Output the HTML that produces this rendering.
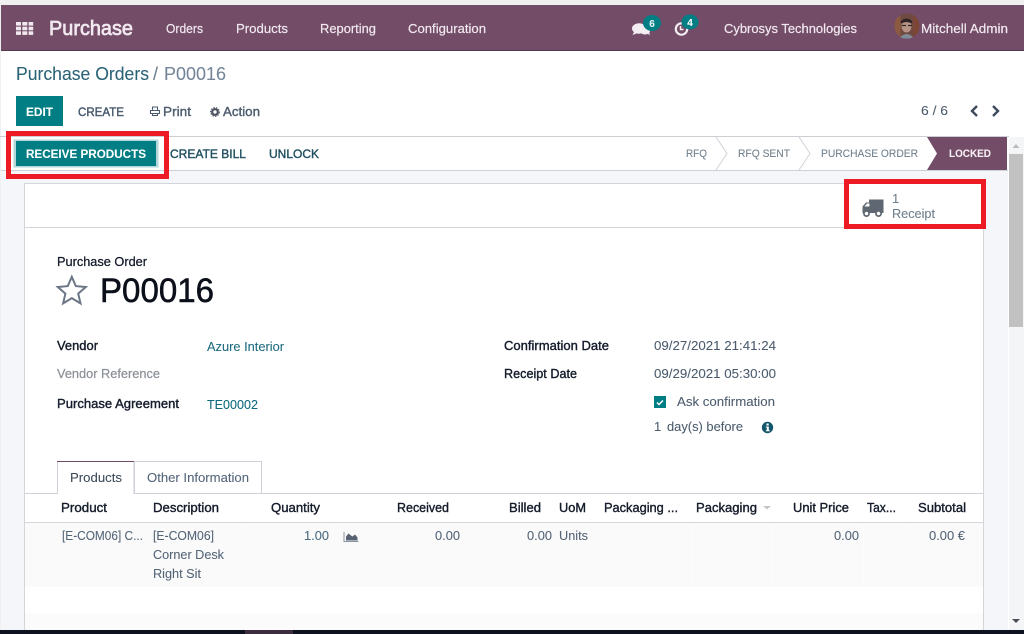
<!DOCTYPE html>
<html><head><meta charset="utf-8"><style>
html,body{margin:0;padding:0;background:#fff;width:1024px;height:634px;overflow:hidden}
svg{display:block}
text{font-family:"Liberation Sans",sans-serif;font-size:13px;white-space:pre;stroke:currentColor;stroke-width:.08}
.m{stroke-width:.38}
</style></head><body>
<svg width="1024" height="634" viewBox="0 0 1024 634" xmlns="http://www.w3.org/2000/svg">
<rect width="1024" height="634" fill="#fff"/>
<rect x="0" y="0" width="1024" height="5" fill="#f0f0f0"/>
<rect x="0" y="0" width="1" height="634" fill="#f0f0f0"/>
<rect x="1" y="5" width="1023" height="45" fill="#734c68"/>
<rect x="1" y="50" width="1023" height="1" fill="#4e3a4c"/>
<!-- grid -->
<g fill="#f0e8ee">
<rect x="16" y="22" width="5" height="3.600"/><rect x="22.300" y="22" width="5" height="3.600"/><rect x="28.600" y="22" width="4.600" height="3.600"/>
<rect x="16" y="26.700" width="5" height="3.600"/><rect x="22.300" y="26.700" width="5" height="3.600"/><rect x="28.600" y="26.700" width="4.600" height="3.600"/>
<rect x="16" y="31.300" width="5" height="3.600"/><rect x="22.300" y="31.300" width="5" height="3.600"/><rect x="28.600" y="31.300" width="4.600" height="3.600"/>
</g>
<g fill="#f1e9ef" color="#f1e9ef">
<text x="49" y="35" textLength="84" lengthAdjust="spacingAndGlyphs" style="font-size:20px;stroke-width:.7">Purchase</text>
<text x="166" y="33" textLength="37" lengthAdjust="spacingAndGlyphs" style="stroke-width:.2">Orders</text>
<text x="236" y="33" textLength="52" lengthAdjust="spacingAndGlyphs" style="stroke-width:.2">Products</text>
<text x="320" y="33" textLength="56" lengthAdjust="spacingAndGlyphs" style="stroke-width:.2">Reporting</text>
<text x="408" y="33" textLength="78" lengthAdjust="spacingAndGlyphs" style="stroke-width:.2">Configuration</text>
<text x="724" y="33" textLength="133" lengthAdjust="spacingAndGlyphs" style="stroke-width:.2">Cybrosys Technologies</text>
<text x="921" y="33" textLength="87" lengthAdjust="spacingAndGlyphs" style="stroke-width:.2">Mitchell Admin</text>
</g>
<!-- chat icon -->
<ellipse cx="639" cy="28.500" rx="7" ry="5.200" fill="#f4eef2"/>
<path d="M634 32l-1.500 3 5-2z" fill="#f4eef2"/>
<ellipse cx="645" cy="31" rx="5" ry="3.500" fill="#f4eef2"/>
<path d="M647 33l3 2.500-1-3.500z" fill="#f4eef2"/>
<ellipse cx="652" cy="23" rx="9" ry="8" fill="#017e84"/>
<text x="652" y="27" text-anchor="middle" fill="#e8f4f6" color="#e8f4f6" style="font-size:10px;font-weight:bold">6</text>
<!-- clock icon -->
<circle cx="681.500" cy="29" r="5.700" fill="none" stroke="#f4eef2" stroke-width="2.200"/>
<path d="M680.500 26v3.500h3" fill="none" stroke="#f4eef2" stroke-width="1.500"/>
<ellipse cx="690" cy="22" rx="8.500" ry="7.500" fill="#017e84"/>
<text x="690" y="26" text-anchor="middle" fill="#fff" color="#fff" style="font-size:10px;font-weight:bold">4</text>
<!-- avatar -->
<circle cx="907" cy="26" r="12.500" fill="#6e4a40"/>
<path d="M894.500 26a12.500 12.500 0 0 1 6-10.700V37a12.500 12.500 0 0 1-6-11z" fill="#8c5a3e"/>
<path d="M913 15a12.500 12.500 0 0 1 6.500 11 12.500 12.500 0 0 1-6.500 11z" fill="#7c4636"/>
<ellipse cx="906.500" cy="26" rx="5" ry="6.500" fill="#b59384"/>
<path d="M900.500 21.500q6-6 12 0l-1 2q-5-3-10 0z" fill="#2f2326"/>
<path d="M902 25.500h4M908 25.500h4" stroke="#2f2428" stroke-width="1.200"/>
<path d="M900 37q7-6 13 0l-3 1.500h-7z" fill="#7f8b96"/>
<!-- breadcrumb -->
<text x="16" y="80" textLength="133" lengthAdjust="spacingAndGlyphs" fill="#2b6376" color="#2b6376" style="font-size:18px">Purchase Orders</text>
<text x="153" y="80" fill="#6d7e8e" color="#6d7e8e" style="font-size:18px">/</text>
<text x="164" y="80" textLength="62" lengthAdjust="spacingAndGlyphs" fill="#75869a" color="#75869a" style="font-size:18px">P00016</text>
<!-- control panel -->
<rect x="16" y="96" width="47" height="30" fill="#017e84"/>
<text x="26" y="116" textLength="27" lengthAdjust="spacingAndGlyphs" fill="#fff" color="#fff" style="font-size:12px;font-weight:bold">EDIT</text>
<text x="78" y="116" textLength="46" lengthAdjust="spacingAndGlyphs" fill="#44566a" color="#44566a" class="m" style="font-size:12px">CREATE</text>
<path d="M152.500 110.500v-3.500h5v3.500M150.500 110.500h9v3h-9zM152.500 113.500v2h5v-2" fill="none" stroke="#4c5c6c" stroke-width="1.100"/>
<text x="163" y="116" textLength="28" lengthAdjust="spacingAndGlyphs" fill="#4c5c6e" color="#4c5c6e" class="m">Print</text>
<circle cx="215" cy="112" r="2.800" fill="none" stroke="#4c5060" stroke-width="2.200"/>
<circle cx="215" cy="112" r="4.400" fill="none" stroke="#4c5060" stroke-width="1" stroke-dasharray="1.500 1.200"/>
<text x="223" y="116" textLength="37" lengthAdjust="spacingAndGlyphs" fill="#4c5c6e" color="#4c5c6e" class="m">Action</text>
<text x="921" y="115" textLength="27" lengthAdjust="spacingAndGlyphs" fill="#4c5c6e" color="#4c5c6e">6 / 6</text>
<path d="M977 106l-5 5 5 5" fill="none" stroke="#3d4b5e" stroke-width="2.400"/>
<path d="M993 106l5 5-5 5" fill="none" stroke="#3d4b5e" stroke-width="2.400"/>
<!-- content bg -->
<rect x="1" y="137" width="1007" height="493" fill="#f5f6fa"/>
<rect x="0" y="136" width="1009" height="1" fill="#ccced4"/>
<rect x="1" y="137" width="1007" height="33" fill="#fff"/>
<rect x="1" y="170" width="1007" height="1" fill="#ced0d8"/>
<!-- statusbar -->
<text x="170" y="158" textLength="76" lengthAdjust="spacingAndGlyphs" fill="#1f4f60" color="#1f4f60" class="m" style="font-size:12px">CREATE BILL</text>
<text x="269" y="158" textLength="50" lengthAdjust="spacingAndGlyphs" fill="#1f4f60" color="#1f4f60" class="m" style="font-size:12px">UNLOCK</text>
<rect x="13.500" y="139.500" width="145" height="28" fill="#b3d6d8"/>
<rect x="16" y="141" width="140" height="25" fill="#017e84"/>
<text x="26" y="158" textLength="120" lengthAdjust="spacingAndGlyphs" fill="#fff" color="#fff" style="font-size:12px;font-weight:bold">RECEIVE PRODUCTS</text>
<g fill="#6f7f8c" color="#6f7f8c">
<text x="686" y="157" textLength="21" lengthAdjust="spacingAndGlyphs" style="font-size:11px">RFQ</text>
<text x="738" y="157" textLength="52" lengthAdjust="spacingAndGlyphs" style="font-size:11px">RFQ SENT</text>
<text x="821" y="157" textLength="97" lengthAdjust="spacingAndGlyphs" style="font-size:11px">PURCHASE ORDER</text>
</g>
<path d="M716 137l11 16.500-11 16.500M799 137l11 16.500-11 16.500" fill="none" stroke="#cfd2d6" stroke-width="1"/>
<path d="M927 137h80v33h-80l10-16.500z" fill="#734c68"/>
<text x="949" y="157" textLength="42" lengthAdjust="spacingAndGlyphs" fill="#f5eef3" color="#f5eef3" style="font-size:11px;font-weight:bold">LOCKED</text>
<!-- sheet -->
<rect x="24.500" y="183.500" width="959" height="460" fill="#fff" stroke="#d3d5da"/>
<rect x="25" y="227" width="958" height="1" fill="#d3d5da"/>
<!-- receipt button -->
<path d="M869 199.500h14.500v13.500h-21v-6.500l3.500-4h3z" fill="#5f6772"/>
<path d="M864.500 206.500l2.500-3h2.500v3z" fill="#fff"/>
<circle cx="866.500" cy="213.500" r="2.600" fill="#fff" stroke="#5f6772" stroke-width="1.700"/>
<circle cx="878.500" cy="213.500" r="2.600" fill="#fff" stroke="#5f6772" stroke-width="1.700"/>
<text x="892" y="203" fill="#6d7e8c" color="#6d7e8c">1</text>
<text x="892" y="218" textLength="43" lengthAdjust="spacingAndGlyphs" fill="#6d7e8c" color="#6d7e8c">Receipt</text>
<!-- title -->
<text x="57" y="266" textLength="90" lengthAdjust="spacingAndGlyphs" fill="#111827" color="#111827" style="stroke-width:.25">Purchase Order</text>
<path d="M71.800 276.800l4 9.300 10 .9-7.600 6.600 2.300 9.800-8.700-5.200-8.700 5.200 2.300-9.800-7.600-6.600 10-.9z" fill="#fff" stroke="#6c7687" stroke-width="2" stroke-linejoin="miter"/>
<text x="100" y="302" textLength="114" lengthAdjust="spacingAndGlyphs" fill="#0b0f1a" color="#0b0f1a" style="font-size:34px;stroke-width:.55">P00016</text>
<!-- fields -->
<g fill="#141b2a" color="#141b2a">
<text x="57" y="350" textLength="41" lengthAdjust="spacingAndGlyphs" class="m">Vendor</text>
<text x="57" y="408" textLength="122" lengthAdjust="spacingAndGlyphs" class="m">Purchase Agreement</text>
<text x="504" y="350" textLength="105" lengthAdjust="spacingAndGlyphs" class="m">Confirmation Date</text>
<text x="504" y="378" textLength="73" lengthAdjust="spacingAndGlyphs" class="m">Receipt Date</text>
</g>
<text x="57" y="378" textLength="103" lengthAdjust="spacingAndGlyphs" fill="#8a8f96" color="#8a8f96" style="stroke-width:.2">Vendor Reference</text>
<text x="207" y="351" textLength="77" lengthAdjust="spacingAndGlyphs" fill="#1f6b7e" color="#1f6b7e">Azure Interior</text>
<text x="207" y="409" textLength="51" lengthAdjust="spacingAndGlyphs" fill="#0d6a7c" color="#0d6a7c">TE00002</text>
<text x="654" y="350" textLength="122" lengthAdjust="spacingAndGlyphs" fill="#4c5c6e" color="#4c5c6e">09/27/2021 21:41:24</text>
<text x="654" y="378" textLength="122" lengthAdjust="spacingAndGlyphs" fill="#4c5c6e" color="#4c5c6e">09/29/2021 05:30:00</text>
<rect x="654" y="396" width="12" height="12" fill="#017e84"/>
<path d="M657 402.500l2 2 4-4" fill="none" stroke="#fff" stroke-width="1.500"/>
<text x="677" y="406" textLength="98" lengthAdjust="spacingAndGlyphs" fill="#4c5c6e" color="#4c5c6e">Ask confirmation</text>
<text x="654" y="431" fill="#4c5c6e" color="#4c5c6e">1</text>
<text x="667" y="431" textLength="76" lengthAdjust="spacingAndGlyphs" fill="#4c5c6e" color="#4c5c6e">day(s) before</text>
<circle cx="767.500" cy="427.500" r="5.700" fill="#13566b"/>
<rect x="766.500" y="423.500" width="2.200" height="2" fill="#fff"/>
<path d="M765.800 426.500h3v3.800h1v1h-4v-1h1v-2.800h-1z" fill="#fff"/>
<!-- tabs -->
<rect x="25" y="493" width="958" height="1" fill="#cfd0d8"/>
<path d="M134.500 493V461.500H261.500V493" fill="#fff" stroke="#cfd0d8"/>
<rect x="57" y="461" width="77" height="34" fill="#fff"/>
<path d="M57.500 494V461.500H134V494" fill="none" stroke="#cfd0d8"/>
<rect x="57" y="461" width="77" height="1" fill="#734c68"/>
<text x="70" y="482" textLength="52" lengthAdjust="spacingAndGlyphs" fill="#3c4a5a" color="#3c4a5a">Products</text>
<text x="147" y="482" textLength="102" lengthAdjust="spacingAndGlyphs" fill="#55657a" color="#55657a">Other Information</text>
<!-- table head -->
<g fill="#141b2a" color="#141b2a">
<text class="m" x="61" y="512" textLength="46" lengthAdjust="spacingAndGlyphs">Product</text>
<text class="m" x="153" y="512" textLength="66" lengthAdjust="spacingAndGlyphs">Description</text>
<text class="m" x="271" y="512" textLength="49" lengthAdjust="spacingAndGlyphs">Quantity</text>
<text class="m" x="397" y="512" textLength="52" lengthAdjust="spacingAndGlyphs">Received</text>
<text class="m" x="509" y="512" textLength="32" lengthAdjust="spacingAndGlyphs">Billed</text>
<text class="m" x="559" y="512" textLength="27" lengthAdjust="spacingAndGlyphs">UoM</text>
<text class="m" x="604" y="512" textLength="74" lengthAdjust="spacingAndGlyphs">Packaging ...</text>
<text class="m" x="696" y="512" textLength="61" lengthAdjust="spacingAndGlyphs">Packaging</text>
<text class="m" x="793" y="512" textLength="56" lengthAdjust="spacingAndGlyphs">Unit Price</text>
<text class="m" x="867" y="512" textLength="29" lengthAdjust="spacingAndGlyphs">Tax...</text>
<text class="m" x="918" y="512" textLength="48" lengthAdjust="spacingAndGlyphs">Subtotal</text>
</g>
<path d="M763 506h8l-4 3.500z" fill="#c2c4c8"/>
<rect x="25" y="522" width="958" height="1" fill="#d6d7dc"/>
<!-- row -->
<rect x="25" y="523" width="958" height="64" fill="#fafafa"/>
<rect x="25" y="613" width="958" height="17" fill="#fbfbfb"/>
<g fill="#fcfcfc">
<rect x="242" y="523" width="1" height="64"/><rect x="333" y="523" width="1" height="64"/>
<rect x="692" y="523" width="1" height="64"/><rect x="771" y="523" width="1" height="64"/><rect x="863" y="523" width="1" height="64"/><rect x="905" y="523" width="1" height="64"/>
</g>
<g fill="#556578" color="#556578">
<text x="62" y="540" textLength="81" lengthAdjust="spacingAndGlyphs">[E-COM06] C...</text>
<text x="153" y="540" textLength="61" lengthAdjust="spacingAndGlyphs">[E-COM06]</text>
<text x="153" y="559" textLength="71" lengthAdjust="spacingAndGlyphs">Corner Desk</text>
<text x="153" y="578" textLength="48" lengthAdjust="spacingAndGlyphs">Right Sit</text>
<text x="435" y="540" textLength="25" lengthAdjust="spacingAndGlyphs">0.00</text>
<text x="527" y="540" textLength="25" lengthAdjust="spacingAndGlyphs">0.00</text>
<text x="559" y="540" textLength="29" lengthAdjust="spacingAndGlyphs">Units</text>
<text x="834" y="540" textLength="25" lengthAdjust="spacingAndGlyphs">0.00</text>
<text x="929" y="540" textLength="36" lengthAdjust="spacingAndGlyphs">0.00 €</text>
</g>
<text x="304" y="540" textLength="25" lengthAdjust="spacingAndGlyphs" fill="#4a6a80" color="#4a6a80">1.00</text>
<path d="M344 532v9.500h14.500" fill="none" stroke="#8a93a0" stroke-width="1"/>
<path d="M346 540.500v-4l2.500-3 2.500 2 1.500 1 2.500-2 2.500 3v3z" fill="#596272"/>
<!-- scrollbar -->
<rect x="1009" y="137" width="15" height="493" fill="#f4f5f7"/>
<path d="M1012.500 148l3.500-4 3.500 4z" fill="#b8bcc0"/>
<rect x="1009" y="154" width="14" height="173" fill="#c1c1c1"/>
<path d="M1012 619h8l-4 4z" fill="#4a4f58"/>
<!-- red annotation boxes -->
<rect x="8.500" y="133.500" width="158" height="43" fill="none" stroke="#ed1c24" stroke-width="5"/>
<rect x="846.500" y="181.500" width="137" height="45" fill="none" stroke="#ed1c24" stroke-width="5"/>
<!-- bottom bar -->
<rect x="0" y="630" width="1024" height="4" fill="#0e1220"/>
<rect x="245" y="630" width="48" height="4" fill="#3b2c3e"/>
</svg>
</body></html>
